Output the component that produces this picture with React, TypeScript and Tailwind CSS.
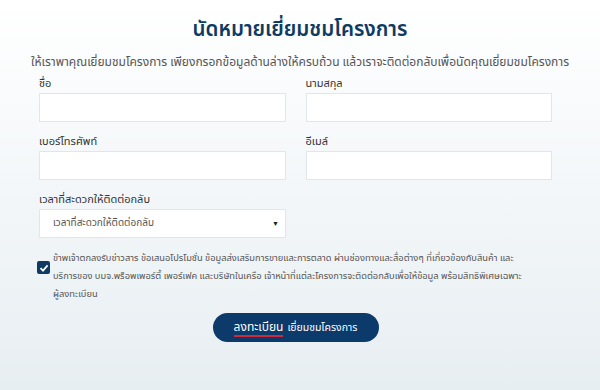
import { useState } from 'react';

const font = { fontFamily: '"Noto Sans Thai", "Noto Sans", "Liberation Sans", sans-serif' };

function Field({ label }: { label: string }) {
  return (
    <div className="flex flex-col">
      <label className="text-[11px] leading-[16px] text-[#333] mb-[1px]">{label}</label>
      <input className="h-[29px] w-full bg-white border border-[#e3e6e9] outline-none" />
    </div>
  );
}

export default function App() {
  const [agree, setAgree] = useState(true);

  return (
    <div
      className="w-[600px] h-[390px] overflow-hidden bg-gradient-to-b from-white to-[#e7eef2]"
      style={font}
    >
      <div className="pt-[14px] text-center">
        <h1 className="text-[20.5px] leading-[32px] font-semibold text-[#0f3b62]">นัดหมายเยี่ยมชมโครงการ</h1>
        <p className="mt-[7px] text-[12px] leading-[18px] text-[#555]">
          ให้เราพาคุณเยี่ยมชมโครงการ เพียงกรอกข้อมูลด้านล่างให้ครบถ้วน แล้วเราจะติดต่อกลับเพื่อนัดคุณเยี่ยมชมโครงการ
        </p>
      </div>

      <div className="pl-[39px] pr-[48px] mt-[5px]">
        <div className="grid grid-cols-2 gap-x-[20px] gap-y-[12px]">
          <Field label="ชื่อ" />
          <Field label="นามสกุล" />
          <Field label="เบอร์โทรศัพท์" />
          <Field label="อีเมล์" />
        </div>

        <div className="mt-[12px] w-[247px]">
          <label className="block text-[11px] leading-[16px] text-[#333] mb-[1px]">เวลาที่สะดวกให้ติดต่อกลับ</label>
          <div className="relative h-[29px] bg-white border border-[#e3e6e9] flex items-center pl-[13px]">
            <span className="text-[10px] text-[#555]">เวลาที่สะดวกให้ติดต่อกลับ</span>
            <span className="absolute right-[6px] top-[9px] text-[7px] text-[#222]">▼</span>
          </div>
        </div>

        <div className="mt-[11px] flex gap-[3px] -ml-[2px]">
          <button
            onClick={() => setAgree(!agree)}
            className="mt-[12px] w-[13px] h-[13px] shrink-0 rounded-[2px] bg-[#0f3b62] flex items-center justify-center"
          >
            {agree && (
              <svg width="10" height="10" viewBox="0 0 10 10">
                <path d="M1.5 5.2 L4 7.6 L8.6 2.4" stroke="white" strokeWidth="1.8" fill="none" />
              </svg>
            )}
          </button>
          <p className="text-[9.3px] leading-[18px] text-[#555] whitespace-nowrap">
            ข้าพเจ้าตกลงรับข่าวสาร ข้อเสนอโปรโมชั่น ข้อมูลส่งเสริมการขายและการตลาด ผ่านช่องทางและสื่อต่างๆ ที่เกี่ยวข้องกับสินค้า และ
            <br />
            บริการของ บมจ.พร็อพเพอร์ตี้ เพอร์เฟค และบริษัทในเครือ เจ้าหน้าที่แต่ละโครงการจะติดต่อกลับเพื่อให้ข้อมูล พร้อมสิทธิพิเศษเฉพาะ
            <br />
            ผู้ลงทะเบียน
          </p>
        </div>

        <div className="mt-[10px] flex justify-center">
          <button className="h-[29px] w-[166px] rounded-full bg-[#0c3a6b] text-white flex items-center justify-center gap-[4px]">
            <span className="border-b-2 border-[#d0293b] text-[12px] leading-[16px]">ลงทะเบียน</span>
            <span className="text-[10.5px] leading-[16px]">เยี่ยมชมโครงการ</span>
          </button>
        </div>
      </div>
    </div>
  );
}
